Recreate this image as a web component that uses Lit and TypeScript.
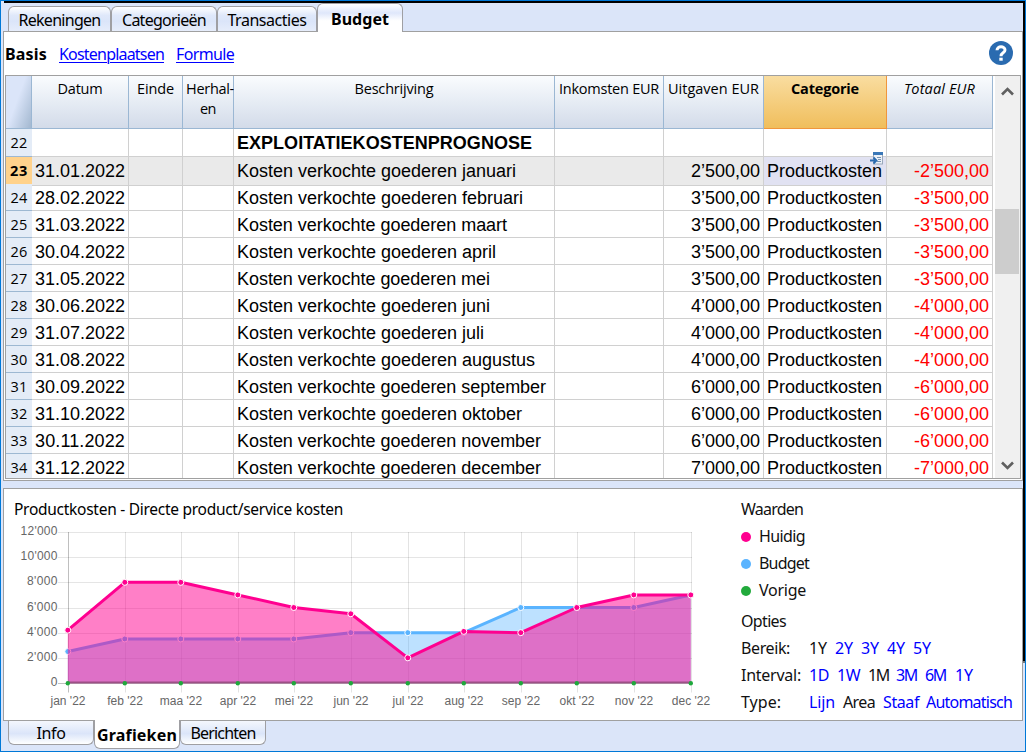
import { LitElement, html, svg, css } from "lit";
import { customElement } from "lit/decorators.js";
import { styleMap } from "lit/directives/style-map.js";

const UI = '"Noto Sans", "Open Sans", sans-serif';
const HEAD = '"Open Sans", "Noto Sans", sans-serif';
const DATA = '"Liberation Sans", Arial, sans-serif';

const ctx = document.createElement("canvas").getContext("2d")!;

/** Text whose tracking is derived from its intended width. */
function fit(text: string, width: number, font: string, cls = "") {
  ctx.font = font;
  const spacing = (width - ctx.measureText(text).width) / text.length;
  return html`<span class="fit ${cls}" style=${styleMap({ font, letterSpacing: spacing.toFixed(3) + "px" })}>${text}</span>`;
}
const ui = (t: string, w: number, cls = "") => fit(t, w, `16px ${UI}`, cls);
const uiBold = (t: string, w: number, cls = "") => fit(t, w, `bold 16px ${UI}`, cls);
const head = (t: string, w: number, style = "") => fit(t, w, `${style} 14.5px ${HEAD}`.trim());
const data = (t: string, w: number) => fit(t, w, `18px ${DATA}`);

const rows: [number, string, string, number, string][] = [
  [23, "31.01.2022", "januari", 279, "2’500,00"],
  [24, "28.02.2022", "februari", 286, "3’500,00"],
  [25, "31.03.2022", "maart", 270, "3’500,00"],
  [26, "30.04.2022", "april", 259, "3’500,00"],
  [27, "31.05.2022", "mei", 253, "3’500,00"],
  [28, "30.06.2022", "juni", 253, "4’000,00"],
  [29, "31.07.2022", "juli", 247, "4’000,00"],
  [30, "31.08.2022", "augustus", 298, "4’000,00"],
  [31, "30.09.2022", "september", 309, "6’000,00"],
  [32, "31.10.2022", "oktober", 285, "6’000,00"],
  [33, "30.11.2022", "november", 304, "6’000,00"],
  [34, "31.12.2022", "december", 304, "7’000,00"],
];

const months = ["jan", "feb", "maa", "apr", "mei", "jun", "jul", "aug", "sep", "okt", "nov", "dec"];
const gridX = [68, 125, 181, 238, 294, 351, 408, 464, 521, 577, 634, 691];
const current = [4200, 8000, 8000, 7000, 6000, 5500, 2000, 4100, 4000, 6000, 7000, 7000];
const budget = [2500, 3500, 3500, 3500, 3500, 4000, 4000, 4000, 6000, 6000, 6000, 7000];
const previous = months.map(() => 0);

@customElement("budget-chart")
export class BudgetChart extends LitElement {
  static styles = css`
    :host { display: block; }
    svg { display: block; }
    text { font-family: "Liberation Sans", Arial, sans-serif; font-size: 12px; fill: #666; }
  `;

  private y(v: number) { return 194 - (v * 151) / 12000; }
  private x(i: number) { return gridX[i] - 4 - 0.2; }

  private area(values: number[], color: string, fill: string) {
    const pts = values.map((v, i) => `${this.x(i)},${this.y(v)}`).join(" ");
    return svg`
      <polygon points="${this.x(0)},${this.y(0)} ${pts} ${this.x(11)},${this.y(0)}" fill=${fill}></polygon>
      <polyline points=${pts} fill="none" stroke=${color} stroke-width="3" stroke-linejoin="round"></polyline>
      ${values.map((v, i) => svg`<circle cx=${this.x(i)} cy=${this.y(v)} r="3" fill=${color} stroke="#fff" stroke-width="1"></circle>`)}`;
  }

  render() {
    return html`<svg width="720" height="231" viewBox="0 0 720 231">
      ${[0, 2, 4, 6, 8, 10, 12].map((k) => {
        const y = Math.round(this.y(k * 1000)) + 0.5;
        return svg`<path d="M54 ${y}H688" stroke=${k ? "#e5e5e5" : "#bfbfbf"}></path>
          <text x="53.5" y=${y + 2.5} text-anchor="end" textLength=${k > 9 ? 37 : k ? 30.5 : 6.5}>${k ? `${k}'000` : "0"}</text>`;
      })}
      ${gridX.map((gx, i) => svg`<path d="M${gx - 3.5} 43V203.500" stroke="#000" stroke-opacity=${i ? 0.11 : 0.25}></path>
        <text x=${gx - 4} y="216" text-anchor="middle">${months[i]} '22</text>`)}
      ${this.area(budget, "#5ab4ff", "rgba(90,180,255,.4)")}
      ${this.area(current, "#ff0090", "rgba(255,0,144,.5)")}
      <path d="M${this.x(0)} 193.500H${this.x(11)}" stroke="#9c5086" stroke-width="2"></path>
      ${previous.map((v, i) => svg`<circle cx=${this.x(i)} cy=${this.y(v) + 0.2} r="2.2" fill="#1fa83c"></circle>`)}
    </svg>`;
  }
}

@customElement("app-root")
export class AppRoot extends LitElement {
  static styles = css`
    :host { display: block; width: 1026px; height: 752px; overflow: hidden; color: #000; }
    * { box-sizing: border-box; }
    .fit { display: inline-block; white-space: pre; }
    .window {
      width: 1026px; height: 752px; background: #dbe5f9; display: grid;
      grid-template-columns: 1fr 2px; grid-template-rows: 2px 1fr;
      border: 1px solid #0078d7;
    }
    .shade-top { grid-column: 1 / 3; background: #000; margin-left: 3px; }
    .shade-right { background: #000; height: 660px; border-bottom: 2px solid #777; }
    .main { display: flex; flex-direction: column; min-width: 0; }
    .tabs { display: flex; height: 29px; align-items: flex-end; border-bottom: 1px solid #a0a0a0; margin: 0 0 0 2px; padding-left: 5px; }
    .tab {
      height: 25px; border: 1px solid #9f9fa3; border-radius: 6px 6px 0 0; border-bottom: 0;
      background: linear-gradient(#fff, #dfe8fa 35%, #dbe5f9 60%, #e6edfb); display: flex; justify-content: center;
    }
    .tab .fit { line-height: 26px !important; }
    .tab.on { height: 29px; background: linear-gradient(#fff, #dfe7fb 32%, #fff 60%); margin-bottom: -1px; padding-top: 2px; }
    .pane { margin-left: 2px; border: 1px solid #a0a0a0; background: #fff; }
    .top { height: 449px; border-top: 0; padding: 0 1px 1px; display: flex; flex-direction: column; }
    .views { height: 43px; display: flex; align-items: center; padding: 1px 8px 0 0; }
    .views .fit { line-height: 20px !important; }
    .link { color: #00f; }
    .views .link { text-decoration: underline; text-underline-offset: 2px; text-decoration-thickness: 1px; }
    .gap12 { margin-left: 12px; }
    .help { margin: -2px 0 0 auto; display: block; }
    .sheet { flex: 1; display: flex; border: 1px solid #a0a0a0; min-height: 0; overflow: hidden; }
    .table { width: 988px; flex: none; overflow: hidden; }
    .row { display: grid; grid-template-columns: 26px 97px 54px 51px 321px 109px 100px 123px 106px; height: 27px; }
    .row > div { border-right: 1px solid #d0d0d0; border-bottom: 1px solid #d0d0d0; padding: 0 3px; overflow: hidden; white-space: nowrap; position: relative; }
    .row .fit { line-height: 28px !important; }
    .row > .num { background: #e4ecf7; border-right: 0; border-bottom-color: #9db8d2; padding: 0; text-align: center; }
    .row > .r { text-align: right; }
    .first { height: 28px; }
    .cur > div { background: #eaeaea; }
    .cur > .num { background: #ffd28c; border-bottom-color: #f0963c; }
    .cur > .sel { background: #e1e2f2; overflow: visible; }
    .picker { position: absolute; right: 3px; top: -5px; }
    .neg { color: #f00; }
    .head { height: 53px; }
    .row.head > div { background: linear-gradient(#fafcfe, #e6ecf4 50%, #d3dbe9); border-color: #9bb7d3; padding: 3px 0 0; text-align: center; white-space: nowrap; }
    .row.head .fit { line-height: 20px !important; }
    .row.head > .corner { background: linear-gradient(110deg, #dbe5f9 45%, #a3b8d0); }
    .row.head > .cat { background: linear-gradient(#f9dda0, #f0be5c); border-color: #f0963c; }
    .row.head > .tight { text-align: left; padding-left: 3px; overflow: visible; }
    .mid { text-align: center; padding-right: 3px; }
    .scroll { flex: 1; margin-left: 1px; background: #f0f0f0; display: flex; flex-direction: column; align-items: stretch; }
    .thumb { height: 65px; background: #cdcdcd; margin: 105px 1px 0 0; }
    .scroll svg { display: block; }
    .scroll .down { margin-top: auto; }
    .bottom { height: 233px; margin-top: 7px; display: flex; }
    .chart { width: 737px; flex: none; display: flex; flex-direction: column; height: 231px; }
    .chart .title { height: 0; padding: 7px 0 0 10px; margin-bottom: -7px; }
    .chart .fit { line-height: 27px !important; }
    .side .fit { line-height: 27px !important; color: #111; }
    .side .fit.link { color: #00f; }
    .side { padding-top: 7px; }
    .line { display: flex; height: 27px; align-items: center; }
    .opties { margin-top: 4px; }
    .dot { width: 10px; height: 10px; border-radius: 50%; margin-right: 8px; }
    .pink { background: #ff0090; } .blue { background: #5ab4ff; } .green { background: #22aa3c; }
    .label { width: 68px; }
    .opts { display: flex; }
    .foot { display: flex; align-items: flex-start; padding-left: 7px; height: 30px; }
    .foot .tab { height: 24px; border: 1px solid #9f9fa3; border-top: 0; border-radius: 0 0 6px 6px; background: linear-gradient(#f4f7fd, #dbe5f9 55%, #fff); }
    .foot .tab .fit { line-height: 25px !important; }
    .foot .tab.on { background: #fff; margin: -1px 0 0; height: 29px; padding-top: 3px; }
    .w102 { width: 103px; } .w105 { width: 106px; } .w100 { width: 100px; } .w86 { width: 86px; }
  `;

  private options(label: string, lw: number, items: [string, number, number][], active: string) {
    return html`<div class="line"><div class="label">${ui(label, lw)}</div>
      <div class="opts">${items.map(([t, w, step]) => html`<div style=${styleMap({ width: step + "px" })}>${ui(t, w, t === active ? "" : "link")}</div>`)}</div></div>`;
  }

  render() {
    return html`<div class="window">
      <div class="shade-top"></div>
      <div class="main">
        <div class="tabs">
          <div class="tab w102">${ui("Rekeningen", 82)}</div>
          <div class="tab w105">${ui("Categorieën", 84)}</div>
          <div class="tab w100">${ui("Transacties", 79)}</div>
          <div class="tab on w86">${uiBold("Budget", 58)}</div>
        </div>
        <div class="pane top">
          <div class="views">
            ${uiBold("Basis", 42)}${ui("Kostenplaatsen", 105, "link gap12")}${ui("Formule", 58, "link gap12")}
            <svg class="help" width="24" height="24" viewBox="0 0 24 24"><circle cx="12" cy="12" r="12" fill="#2a6bb0"></circle>
              <path d="M8 9.2C8 4.700 16 4.700 16 9.100C16 12 12 11.700 12 15.200" fill="none" stroke="#fff" stroke-width="3"></path><rect x="10.300" y="16.700" width="3.400" height="3" fill="#fff"></rect></svg>
          </div>
          <div class="sheet">
            <div class="table">
              <div class="row head">
                <div class="corner"></div><div>${head("Datum", 45)}</div><div>${head("Einde", 37)}</div>
                <div class="tight">${head("Herhal-", 48)}<div class="mid">${head("en", 16)}</div></div>
                <div>${head("Beschrijving", 79)}</div><div>${head("Inkomsten EUR", 100)}</div><div>${head("Uitgaven EUR", 91)}</div>
                <div class="cat">${head("Categorie", 68, "bold")}</div><div>${head("Totaal EUR", 71, "italic")}</div>
              </div>
              <div class="row first">
                <div class="num">${head("22", 17)}</div><div></div><div></div><div></div>
                <div>${fit("EXPLOITATIEKOSTENPROGNOSE", 295, `bold 18px ${DATA}`)}</div><div></div><div></div><div></div><div></div>
              </div>
              ${rows.map(([n, date, month, w, amount], i) => html`<div class="row ${i ? "" : "cur"}">
                <div class="num">${head(String(n), i ? 17 : 18, i ? "" : "bold")}</div>
                <div>${data(date, 90)}</div><div></div><div></div>
                <div>${data(`Kosten verkochte goederen ${month}`, w)}</div><div></div>
                <div class="r">${data(amount, 69)}</div>
                <div class="sel">${data("Productkosten", 115)}${i ? "" : html`<svg class="picker" width="13" height="13" viewBox="0 0 13 13">
                  <rect x="3.500" y=".500" width="9" height="11.500" fill="#edf2f8" stroke="#9aa9bb"></rect><path d="M3 0H13V3H3z" fill="#3a78b8"></path>
                  <path d="M7 5.500H11M8 7.500H11M7 9.500H11" stroke="#7894b4"></path><path d="M0 8.500H5M3.500 5.500L6.500 8.500L3.500 11.500" fill="none" stroke="#2a6bb0" stroke-width="1.800"></path></svg>`}</div>
                <div class="r neg">${data("-" + amount, 75)}</div>
              </div>`)}
            </div>
            <div class="scroll">
              <svg width="25" height="28" viewBox="0 0 25 28"><path d="M7 18.500L12.500 13L18 18.500" fill="none" stroke="#606060" stroke-width="2.600"></path></svg>
              <div class="thumb"></div>
              <svg class="down" width="25" height="27" viewBox="0 0 25 27"><path d="M7 11.500L12.500 17L18 11.500" fill="none" stroke="#606060" stroke-width="2.600"></path></svg>
            </div>
          </div>
        </div>
        <div class="pane bottom">
          <div class="chart">
            <div class="title">${fit("Productkosten - Directe product/service kosten", 329, `15.5px ${UI}`)}</div>
            <budget-chart></budget-chart>
          </div>
          <div class="side">
            <div class="line">${ui("Waarden", 62)}</div>
            <div class="line"><div class="dot pink"></div>${ui("Huidig", 46)}</div>
            <div class="line"><div class="dot blue"></div>${ui("Budget", 50)}</div>
            <div class="line"><div class="dot green"></div>${ui("Vorige", 47)}</div>
            <div class="line opties">${ui("Opties", 45)}</div>
            ${this.options("Bereik:", 49, [["1Y", 18, 26], ["2Y", 18, 26], ["3Y", 18, 26], ["4Y", 18, 26], ["5Y", 18, 26]], "1Y")}
            ${this.options("Interval:", 60, [["1D", 20, 28], ["1W", 23, 31], ["1M", 21, 28], ["3M", 21, 29], ["6M", 21, 30], ["1Y", 18, 26]], "1M")}
            ${this.options("Type:", 40, [["Lijn", 26, 34], ["Area", 32, 40], ["Staaf", 36, 43], ["Automatisch", 86, 87]], "Area")}
          </div>
        </div>
        <div class="foot">
          <div class="tab w86">${ui("Info", 29)}</div>
          <div class="tab on w86">${uiBold("Grafieken", 80)}</div>
          <div class="tab w86">${ui("Berichten", 65)}</div>
        </div>
      </div>
      <div class="shade-right"></div>
    </div>`;
  }
}
